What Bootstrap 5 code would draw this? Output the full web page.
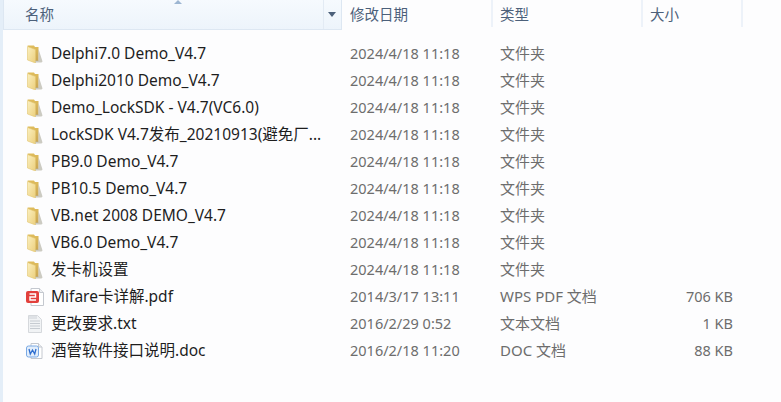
<!DOCTYPE html>
<html lang="zh-CN">
<head>
  <meta charset="UTF-8" />
  <meta name="viewport" content="width=device-width, initial-scale=1.0"/>
  <title>文件列表</title>
  <link href="https://cdn.jsdelivr.net/npm/bootstrap@5.3.0/dist/css/bootstrap.min.css" rel="stylesheet" />
  <style>
    html, body { height: 100%; }
    body {
      background: #fdfdfe;
      font-family: "Noto Sans", "Noto Sans CJK SC", sans-serif;
      font-size: 14.5px;
      overflow: hidden;
    }
    .explorer { height: 402px; border-left: 3px solid #e4eef8; }
    .col-name { width: 339px; flex: none; }
    .col-date { width: 151px; flex: none; }
    .col-type { width: 150px; flex: none; }
    .col-size { width: 100px; flex: none; }
    .head-row { height: 30px; color: #4c607a; }
    .head-name {
      height: 30px; position: relative; padding-left: 21px; padding-top: 4px;
      background: linear-gradient(#f6fafe, #edf4fb);
      border: 1px solid #dde7f2; border-top: 0;
    }
    .head-cell { padding-left: 8px; padding-top: 4px; border-right: 2px solid #edf2f9; height: 27px; }
    .head-cell.col-type, .head-cell.col-size { padding-left: 7px; }
    .sort-arrow {
      position: absolute; left: 170px; top: 0; width: 0; height: 0;
      border-left: 4px solid transparent; border-right: 4px solid transparent;
      border-bottom: 4px solid #9db6d2;
    }
    .drop-btn {
      position: absolute; right: 0; top: 0; width: 18px; height: 29px;
      border-left: 1px solid #e3ebf4;
    }
    .drop-btn::after {
      content: ""; position: absolute; left: 4px; top: 12px;
      border-left: 4.5px solid transparent; border-right: 4.5px solid transparent;
      border-top: 5px solid #4c607a;
    }
    .file-list { padding: 10px 0 0; list-style: none; margin: 0; }
    .file-row { height: 27px; color: #6d6d6d; line-height: 27px; white-space: nowrap; }
    .file-name { padding-left: 23px; color: #1e1e1e; gap: 7px; font-size: 15.5px; }
    .file-date { padding-left: 8px; }
    .file-type { padding-left: 7px; font-size: 15px; }
    .file-size { text-align: right; padding-right: 10px; }
    .file-icon { width: 18px; height: 18px; flex: none; }
  </style>
</head>
<body>
  <svg width="0" height="0" class="d-block position-absolute">
    <defs>
      <linearGradient id="fold" x1="0" x2="1" y1="0" y2="1">
        <stop offset="0" stop-color="#fbf0c0"/>
        <stop offset="1" stop-color="#eccf7c"/>
      </linearGradient>
      <linearGradient id="foldBack" x1="0" x2="0" y1="0" y2="1">
        <stop offset="0" stop-color="#e0bd5c"/>
        <stop offset="1" stop-color="#c9a654"/>
      </linearGradient>
      <symbol id="folder" viewBox="0 0 18 18">
        <path d="M1.500 .5h6.500l1 1.500h3.500v14H8z" fill="url(#foldBack)"/>
        <path d="M1.500 1.500l8 3V18l-8-3z" fill="url(#fold)" stroke="#e3c670" stroke-width=".6"/>
        <path d="M12.500 4l4 12.500-1 1H9.500v-2h3z" fill="#b7b5a8" opacity=".7"/>
      </symbol>
      <symbol id="pdf" viewBox="0 0 18 18">
        <path d="M5 .5h8.500l4 4v13H5z" fill="#fff" stroke="#c4c8cf"/>
        <path d="M13.500 .5v4h4" fill="#eef0f3" stroke="#c4c8cf"/>
        <rect x="0" y="3" width="13" height="12" rx="2" fill="#e2403c"/>
        <path d="M3.500 6h6v3H4v3h6" fill="none" stroke="#fff" stroke-width="1.400"/>
      </symbol>
      <symbol id="txt" viewBox="0 0 18 18">
        <path d="M2.500 .5h9l4 4v13h-13z" fill="#f1f3f5" stroke="#d5d8dc"/>
        <path d="M4 6h10M4 8.500h10M4 11h10M4 13.500h10" stroke="#c6cbd1" stroke-width="1"/>
        <path d="M3 1h8v3H3z" fill="#dfe2e6"/>
      </symbol>
      <symbol id="doc" viewBox="0 0 18 18">
        <path d="M5 1.500h7.500l3.500 3.500v11.500H5z" fill="#fff" stroke="#c4c8cf"/>
        <path d="M12.500 1.500V5H16" fill="#eef0f3" stroke="#c4c8cf"/>
        <rect x=".5" y="4" width="12" height="11" rx="2" fill="#e3eefb" stroke="#7aa9e4"/>
        <path d="M3 7l1.300 5 2.200-4 2.200 4L10 7" fill="none" stroke="#2f6fd0" stroke-width="1.300"/>
      </symbol>
    </defs>
  </svg>

  <div class="explorer">
    <div class="head-row d-flex">
      <div class="col-name head-name">
        <span class="sort-arrow"></span>
        名称
        <span class="drop-btn"></span>
      </div>
      <div class="col-date head-cell">修改日期</div>
      <div class="col-type head-cell">类型</div>
      <div class="col-size head-cell">大小</div>
    </div>
    <ul class="file-list" id="files"></ul>
  </div>

  <script>
    const files = [
      ['folder', 'Delphi7.0 Demo_V4.7', '2024/4/18 11:18', '文件夹', ''],
      ['folder', 'Delphi2010 Demo_V4.7', '2024/4/18 11:18', '文件夹', ''],
      ['folder', 'Demo_LockSDK - V4.7(VC6.0)', '2024/4/18 11:18', '文件夹', ''],
      ['folder', 'LockSDK V4.7发布_20210913(避免厂...', '2024/4/18 11:18', '文件夹', ''],
      ['folder', 'PB9.0 Demo_V4.7', '2024/4/18 11:18', '文件夹', ''],
      ['folder', 'PB10.5 Demo_V4.7', '2024/4/18 11:18', '文件夹', ''],
      ['folder', 'VB.net 2008 DEMO_V4.7', '2024/4/18 11:18', '文件夹', ''],
      ['folder', 'VB6.0 Demo_V4.7', '2024/4/18 11:18', '文件夹', ''],
      ['folder', '发卡机设置', '2024/4/18 11:18', '文件夹', ''],
      ['pdf', 'Mifare卡详解.pdf', '2014/3/17 13:11', 'WPS PDF 文档', '706 KB'],
      ['txt', '更改要求.txt', '2016/2/29 0:52', '文本文档', '1 KB'],
      ['doc', '酒管软件接口说明.doc', '2016/2/18 11:20', 'DOC 文档', '88 KB']
    ];
    document.getElementById('files').innerHTML = files.map(f => `
      <li class="file-row d-flex">
        <div class="col-name file-name d-flex align-items-center">
          <svg class="file-icon"><use href="#${f[0]}"/></svg><span>${f[1]}</span>
        </div>
        <div class="col-date file-date">${f[2]}</div>
        <div class="col-type file-type">${f[3]}</div>
        <div class="col-size file-size">${f[4]}</div>
      </li>`).join('');
  </script>
  <script src="https://cdn.jsdelivr.net/npm/bootstrap@5.3.0/dist/js/bootstrap.bundle.min.js"></script>
</body>
</html>
